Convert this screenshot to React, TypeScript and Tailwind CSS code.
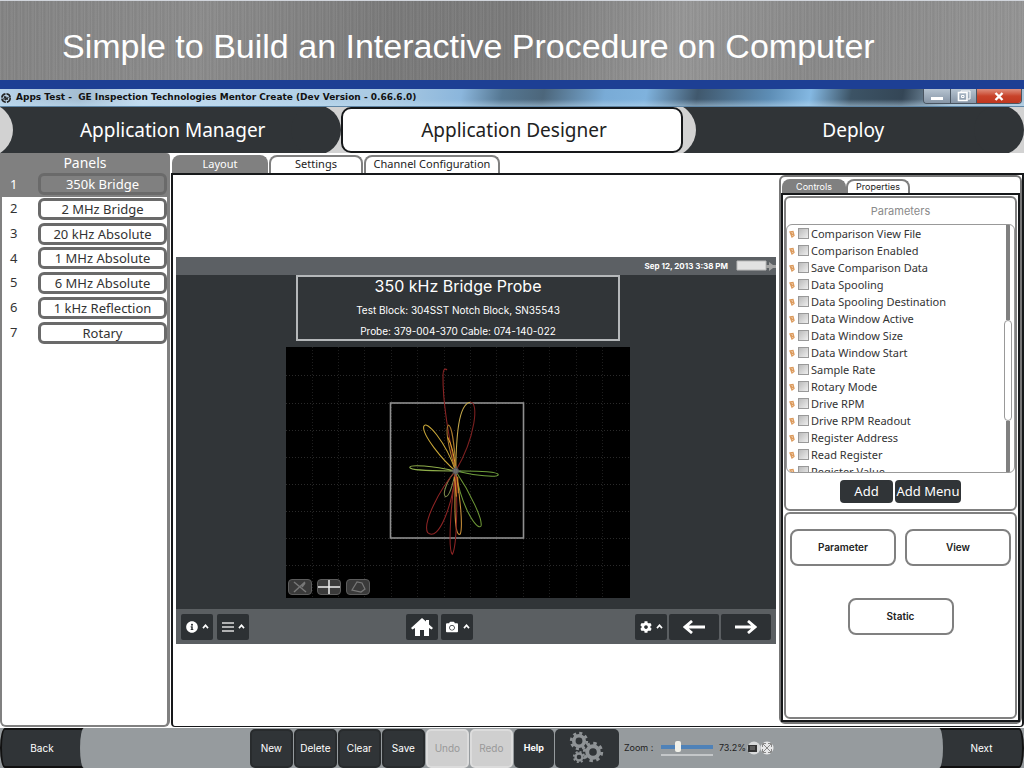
import { cva } from "class-variance-authority"
import clsx from "clsx"
import { FaCamera, FaCog, FaInfoCircle } from "react-icons/fa"
import type { ReactNode } from "react"

const panels = ["350k Bridge", "2 MHz Bridge", "20 kHz Absolute", "1 MHz Absolute", "6 MHz Absolute", "1 kHz Reflection", "Rotary"]

const parameters = [
    "Comparison View File",
    "Comparison Enabled",
    "Save Comparison Data",
    "Data Spooling",
    "Data Spooling Destination",
    "Data Window Active",
    "Data Window Size",
    "Data Window Start",
    "Sample Rate",
    "Rotary Mode",
    "Drive RPM",
    "Drive RPM Readout",
    "Register Address",
    "Read Register",
    "Register Value",
]

const columns = [26, 52, 78, 105, 131, 158, 184, 210, 237, 263, 290, 316]
const rows = [28, 56, 83, 110, 137, 164, 191, 218]

const Banner = () => (
    <header className="h-20 flex items-center pl-[62px] border-t border-gray-300 bg-[#8a8a8a] bg-[repeating-linear-gradient(90deg,rgba(255,255,255,0.07)_0px,rgba(0,0,0,0.05)_2px,rgba(255,255,255,0.03)_5px,rgba(0,0,0,0.06)_7px),linear-gradient(100deg,#858585_0%,#8d8d8d_20%,#7b7b7b_38%,#7c7c7c_50%,#979797_66%,#8a8a8a_80%,#969696_100%)]">
        <h1 className="font-['Liberation_Sans',sans-serif] text-[34px] pt-3 text-white whitespace-nowrap">
            Simple to Build an Interactive Procedure on Computer
        </h1>
    </header>
)

const TitleBar = () => (
    <div className="h-[18px] flex items-start justify-between pr-[2px] border-b border-[#5f86a6] bg-[linear-gradient(180deg,rgba(255,255,255,0)_60%,rgba(190,220,240,0.5)_100%),linear-gradient(100deg,#b9d4ea_0%,#a4bdd2_8%,#c3dcf0_14%,#a9c9e2_38%,#8bb6dc_45%,#557792_49%,#4c667b_53%,#79abd6_59%,#7fb2dd_63%,#40586d_68%,#5d8db5_75%,#84b8e2_79%,#3c5365_83%,#344656_88%,#9db8cd_93%,#a9c3d8_100%)]">
        <div className="flex items-center gap-1 h-full pt-px">
            <svg viewBox="0 0 12 12" className="w-3 h-3" fill="none" stroke="#222">
                <circle cx="6" cy="6" r="4.2" strokeWidth="1.600" strokeDasharray="5.500 1.100" />
                <path d="M3.500 7.500c1.500-4 3.500-3 2-1s1 2 2.800-1.500M4 4.300l4 3.400" strokeWidth="1.100" />
            </svg>
            <span className="font-['DejaVu_Sans',sans-serif] font-bold text-[9px] text-[#111] whitespace-pre">
                {"Apps Test -  GE Inspection Technologies Mentor Create (Dev Version - 0.66.6.0)"}
            </span>
        </div>
        <div className="flex h-[15px] border border-t-0 border-[#4a5561] rounded-b-sm overflow-hidden">
            <button aria-label="Minimize" className="w-[27px] flex justify-center items-end pb-[3px] bg-linear-to-b from-[#b6c3d0] to-[#8695a6] border-r border-[#4a5561]">
                <span className="w-3 h-[3px] bg-white" />
            </button>
            <button aria-label="Maximize" className="w-[26px] flex justify-center items-center bg-linear-to-b from-[#b6c3d0] to-[#8695a6] border-r border-[#4a5561]">
                <svg viewBox="0 0 14 12" className="w-[14px] h-3" fill="none" stroke="#fff" strokeWidth="1.600">
                    <path d="M4 2V1h9v8h-2" strokeWidth="1" />
                    <path d="M1.500 2.500h8.500v8H1.500z" />
                    <path d="M4.500 5.500h2.500v2H4.500z" strokeWidth="1" />
                </svg>
            </button>
            <button aria-label="Close" className="w-11 flex justify-center items-center bg-linear-to-b from-[#dd8d7c] via-[#c8432a] to-[#c0371f]">
                <svg viewBox="0 0 10 9" className="w-[10px] h-[9px]" stroke="#fff" strokeWidth="2.400">
                    <path d="M1.500 1l7 7M8.500 1l-7 7" />
                </svg>
            </button>
        </div>
    </div>
)

// dark steps: a gray disc bites the left edge, a dark disc rounds off the right one
const Steps = () => (
    <nav className="h-[46px] grid grid-cols-3 bg-[#d2d2d2] text-[19px]">
        {["Application Manager", "Application Designer", "Deploy"].map((name) =>
            name === "Application Designer" ? (
                <button key={name} className="bg-white border-2 border-[#16181a] rounded-[10px] text-[#222] pl-1">
                    {name}
                </button>
            ) : (
                <button
                    key={name}
                    className={clsx(
                        "relative overflow-hidden text-white bg-[linear-gradient(#303437,#303437)] bg-[length:calc(100%-16px)_100%] bg-no-repeat",
                        "before:absolute before:-left-[41px] before:-top-1 before:size-[54px] before:rounded-full before:bg-[#d2d2d2]",
                        "after:absolute after:right-0 after:-top-[2px] after:size-[50px] after:rounded-full after:bg-[#303437]",
                        name === "Application Manager" && "pl-1"
                    )}
                >
                    {name}
                </button>
            )
        )}
    </nav>
)

const PanelList = () => (
    <aside className="w-[170px] shrink-0 flex flex-col text-[13px]">
        <h2 className="h-[19px] bg-[#808080] text-white text-center text-[14px] leading-5 rounded-tr-sm">Panels</h2>
        <div className="grow border-2 border-t-0 border-r-3 border-[#808080] rounded-b-md">
            <ol className="h-[173px] grid grid-rows-7">
                {panels.map((name, i) => (
                    <li key={name} className={clsx("flex items-center pl-2", i === 0 ? "bg-[#808080] text-white" : "text-[#333]")}>
                        <span className="w-7">{i + 1}</span>
                        <button className="grow h-[22px] leading-4 border-3 border-[#6a6a6a] rounded-md">{name}</button>
                    </li>
                ))}
            </ol>
        </div>
    </aside>
)

const tab = cva("border-2 border-b-0 border-[#808080] rounded-t-lg", {
    variants: { active: { true: "bg-[#808080] text-white", false: "bg-white text-[#222]" } },
})

const Caret = () => (
    <svg viewBox="0 0 8 6" className="w-[7px] h-[5px]" fill="none" stroke="#fff" strokeWidth="2">
        <path d="M1 5l3-3.500L7 5" />
    </svg>
)

const DeviceButton = ({ label, wide, children }: { label: string; wide?: boolean; children: ReactNode }) => (
    <button aria-label={label} className={clsx("h-[26px] flex items-center justify-center gap-1 bg-[#2d3134] rounded-xs text-white", wide ? "w-[50px]" : "w-8")}>
        {children}
    </button>
)

const ToolButton = ({ label, children }: { label: string; children: ReactNode }) => (
    <button aria-label={label} className="w-6 h-4 flex items-center justify-center rounded-sm bg-[#3a3a3a] border border-[#5c5c5c]">
        {children}
    </button>
)

const Plot = () => (
    <div className="relative w-[344px] h-[251px] mt-[6px] bg-black">
        <svg viewBox="0 0 344 251" className="w-full h-full" fill="none">
            <g stroke="#1e1e1e" strokeDasharray="1 2">
                {columns.map((x) => <path key={x} d={`M${x + 0.5} 0V251`} />)}
                {rows.map((y) => <path key={y} d={`M0 ${y + 0.5}H344`} stroke="#2a2a2a" />)}
            </g>
            <rect x="104.5" y="56" width="133" height="135" stroke="#8f8f8f" strokeWidth="1.600" />
            <g transform="translate(93 13) scale(0.3333)" strokeWidth="3.200">
                <path d="M204 30C198 24 192 28 192 45C191 130 208 220 230 333" stroke="#8d2424" />
                <path d="M230 333C232 230 238 132 274 127" stroke="#c2a64a" />
                <path d="M274 127C300 125 290 230 230 333" stroke="#7c2020" />
                <path d="M230 333C190 300 130 225 134 200C140 175 200 245 230 333Z" stroke="#c9a738" />
                <path d="M230 333C205 250 200 205 208 195C220 195 226 260 232 333Z" stroke="#a8792c" />
                <path d="M230 333C226 280 216 250 206 232" stroke="#d8a52c" />
                <path d="M230 333C150 332 92 332 92 322C94 312 160 318 230 333Z" stroke="#8fae4a" />
                <path d="M230 333C310 332 358 336 358 344C356 354 290 347 230 333Z" stroke="#6f9f3c" />
                <path d="M230 333C275 400 312 480 306 498C294 514 246 440 230 333Z" stroke="#6d9736" />
                <path d="M230 333C204 360 190 400 199 410C212 412 222 370 230 333Z" stroke="#7d8a4c" />
                <path d="M230 333C244 410 252 500 244 522C226 534 226 440 230 333Z" stroke="#c98f3a" />
                <path d="M230 333C236 420 234 560 220 583C206 570 216 430 230 333Z" stroke="#8d2424" />
                <path d="M230 333C180 390 130 490 146 518C180 548 222 430 230 333Z" stroke="#8d2424" />
                <path d="M226 350L232 410M236 350L238 400" stroke="#d88a2a" />
                <circle cx="230" cy="333" r="8" fill="#777" stroke="#555" />
                <path d="M214 333h32M230 317v32" stroke="#666" />
            </g>
        </svg>
        <div className="absolute left-[2px] bottom-[3px] flex gap-[5px]">
            <ToolButton label="Clear trace">
                <svg viewBox="0 0 16 14" className="w-4 h-[14px]" stroke="#777" strokeWidth="1.500" fill="none">
                    <path d="M2 2l12 10M13 2L2 12M10 7l3-4" />
                </svg>
            </ToolButton>
            <ToolButton label="Null">
                <svg viewBox="0 0 22 16" className="w-[22px] h-4 shrink-0" stroke="#eee" strokeWidth="1.500">
                    <path d="M0 8h22M11 1v14" />
                </svg>
            </ToolButton>
            <ToolButton label="Shape">
                <svg viewBox="0 0 16 14" className="w-4 h-[14px]" stroke="#777" strokeWidth="1.200" fill="none">
                    <path d="M2 10l5-8 5 1 3 6-4 3z" />
                </svg>
            </ToolButton>
        </div>
    </div>
)

const Device = () => (
    <div className="w-full flex flex-col bg-[#313538] text-white">
        <div className="h-[18px] flex items-center justify-end gap-2 bg-[#5c6064]">
            <span className="text-[8px] font-bold font-['Inter',sans-serif]">Sep 12, 2013 3:38 PM</span>
            <svg viewBox="0 0 40 12" className="w-10 h-3">
                <path d="M1 1h29v9H1z" fill="#e2e2e2" stroke="#bbb" />
                <path d="M30 5h3V2l4 3h3v3h-3l-4 3V8h-3z" fill="#a4a4a4" />
            </svg>
        </div>
        <div className="flex flex-col items-center pr-9 pb-[11px]">
            <div className="w-[324px] h-[66px] border-2 border-[#b5b8ba] text-center font-['Inter',sans-serif]">
                <h3 className="text-[16px] leading-[19px]">350 kHz Bridge Probe</h3>
                <p className="text-[10px] leading-[21px] pt-1">Test Block: 304SST Notch Block, SN35543</p>
                <p className="text-[10px] leading-[21px]">Probe: 379-004-370 Cable: 074-140-022</p>
            </div>
            <Plot />
        </div>
        <div className="h-[35px] flex items-center justify-between px-[5px] bg-[#5b5f62]">
            <div className="flex gap-1 w-[136px]">
                <DeviceButton label="Info"><FaInfoCircle className="w-3 h-3" /><Caret /></DeviceButton>
                <DeviceButton label="Menu">
                    <svg viewBox="0 0 12 10" className="w-3 h-[10px]" stroke="#ddd" strokeWidth="1.600"><path d="M0 1h12M0 5h12M0 9h12" /></svg>
                    <Caret />
                </DeviceButton>
            </div>
            <div className="flex gap-[3px] pr-[72px] grow justify-end">
                <DeviceButton label="Home">
                    <svg viewBox="0 0 22 18" className="w-[22px] h-[18px]" fill="#fff">
                        <path d="M11 0L0 10l1.500 1.500L4 10v8h5v-6h4v6h5v-8l2.500 1.500L22 10l-4-3.600V2h-3v1.600z" />
                    </svg>
                </DeviceButton>
                <DeviceButton label="Camera"><FaCamera className="w-[14px] h-3" /><Caret /></DeviceButton>
            </div>
            <div className="flex gap-[2px] pl-[90px]">
                <DeviceButton label="Settings"><FaCog className="w-3 h-3" /><Caret /></DeviceButton>
                {["Previous", "Following"].map((label) => (
                    <DeviceButton key={label} label={label} wide>
                        <svg viewBox="0 0 22 14" className={clsx("w-[22px] h-[14px]", label === "Following" && "rotate-180")} fill="none" stroke="#fff" strokeWidth="2.800">
                            <path d="M22 7H2M9 1L2 7l7 6" />
                        </svg>
                    </DeviceButton>
                ))}
            </div>
        </div>
    </div>
)

const BoxButton = ({ children }: { children: ReactNode }) => (
    <button className="w-[106px] h-[37px] border-2 border-[#808080] rounded-lg text-[10px] font-semibold text-[#222] font-['Inter',sans-serif]">{children}</button>
)

const ControlsPanel = () => (
    <aside className="w-[243px] shrink-0 mb-[2px] flex flex-col border-2 border-[#777] rounded-md">
        <div className="h-4 flex items-end text-[9px] leading-3 pl-px font-['Inter',sans-serif]">
            <button className={clsx(tab({ active: true }), "w-16 h-[14px] pb-px")}>Controls</button>
            <button className={clsx(tab({ active: false }), "w-16 h-[14px] pb-px")}>Properties</button>
        </div>
        <div className="grow flex flex-col border-2 border-[#16181a] p-px gap-px">
            <section className="h-[315px] flex flex-col border-2 border-[#808080] rounded-md">
                <h2 className="text-[11px] leading-[26px] text-[#8a8a8a] text-center font-['Inter',sans-serif]">Parameters</h2>
                <div className="h-[249px] flex border border-[#999] rounded-md overflow-hidden">
                    <ul className="grow text-[11px] leading-[17px] text-[#333]">
                        {parameters.map((name) => (
                            <li key={name}>
                                <label className="h-[17px] flex items-center whitespace-nowrap pl-[2px]">
                                    <svg viewBox="0 0 6 8" className="w-[6px] h-2 mr-[3px]" fill="none" stroke="#dc9a5c" strokeWidth="1.300">
                                        <path d="M1 2l3-.500 1 4-2 1.500zM1 2l3 3" />
                                    </svg>
                                    <input type="checkbox" className="appearance-none w-[11px] h-[11px] mr-[2px] border border-[#999] bg-linear-to-br from-[#bbb] to-[#eee]" />
                                    {name}
                                </label>
                            </li>
                        ))}
                    </ul>
                    <div className="w-2 mr-[2px] flex flex-col items-center">
                        <span className="w-1 h-[95px] bg-[#808080]" />
                        <span className="w-2 h-[101px] shrink-0 border border-[#999] rounded-sm bg-white" />
                        <span className="w-1 grow bg-[#808080]" />
                    </div>
                </div>
                <div className="flex justify-center gap-[2px] pt-[7px] text-[13px] text-white">
                    <button className="w-[53px] h-[23px] rounded-sm bg-[#303437]">Add</button>
                    <button className="w-[66px] h-[23px] rounded-sm bg-[#303437] whitespace-nowrap">Add Menu</button>
                </div>
            </section>
            <section className="grow border-2 border-[#808080] rounded-md pt-[15px] px-1">
                <div className="flex justify-between">
                    <BoxButton>Parameter</BoxButton>
                    <BoxButton>View</BoxButton>
                </div>
                <div className="flex justify-center pt-8">
                    <BoxButton>Static</BoxButton>
                </div>
            </section>
        </div>
    </aside>
)

const Workspace = () => (
    <div className="grow min-w-0 flex flex-col">
        <div className="h-5 flex items-end gap-px text-[11px] leading-[14px] pl-[2px]">
            <button className={clsx(tab({ active: true }), "w-24 h-[18px] pb-[2px]")}>Layout</button>
            <button className={clsx(tab({ active: false }), "w-[94px] h-[18px] pb-[2px]")}>Settings</button>
            <button className={clsx(tab({ active: false }), "w-[136px] h-[18px] pb-[2px]")}>Channel Configuration</button>
        </div>
        <div className="grow flex border-2 border-b-1 border-[#16181a] rounded-b-sm ml-px">
            <div className="grow flex items-center px-[3px]">
                <Device />
            </div>
            <ControlsPanel />
        </div>
    </div>
)

const footerButton = cva("w-[43px] h-[39px] rounded-[5px] text-[10px] border-2", {
    variants: {
        kind: {
            dark: "bg-[#303437] border-[#282b2d] text-white",
            off: "bg-[#cfcfcf] border-[#dcdcdc] text-[#999]",
        },
    },
})

const Gear = ({ x, y, r }: { x: number; y: number; r: number }) => (
    <g transform={`translate(${x} ${y})`} fill="none" stroke="#8f9396">
        <circle r={r * 0.58} strokeWidth={r * 0.4} />
        <circle r={r * 0.87} strokeWidth={r * 0.3} strokeDasharray={`${r * 0.341} ${r * 0.342}`} />
    </g>
)

const Footer = () => (
    <footer className="h-10 flex justify-between bg-[#969b9e] text-[10px] font-['Inter',sans-serif]">
        <button className="w-[84px] bg-[#303437] border-2 border-[#111] text-white [border-radius:5px_0_0_5px/20px_0_0_20px] relative after:absolute after:-right-[2px] after:-inset-y-[2px] after:w-1 after:bg-[#969b9e] after:[border-radius:4px_0_0_4px/20px_0_0_20px]">
            Back
        </button>
        <div className="flex items-center gap-px pl-[2px]">
            {["New", "Delete", "Clear", "Save"].map((name) => (
                <button key={name} className={footerButton({ kind: "dark" })}>{name}</button>
            ))}
            {["Undo", "Redo"].map((name) => (
                <button key={name} disabled className={footerButton({ kind: "off" })}>{name}</button>
            ))}
            <button className="w-10 h-[39px] rounded-[5px] bg-[#303437] text-white text-[9px] font-bold">Help</button>
            <button aria-label="Options" className="w-16 h-[39px] rounded-[5px] bg-[#303437] flex items-center justify-center">
                <svg viewBox="0 0 38 34" className="w-[38px] h-[34px]">
                    <Gear x={11} y={10} r={9} />
                    <Gear x={25} y={21} r={10} />
                    <Gear x={11} y={26} r={6} />
                </svg>
            </button>
            <label htmlFor="zoom" className="w-10 pl-1 text-[9px] text-[#222] whitespace-nowrap">Zoom :</label>
            <div className="w-[52px] border-b-2 border-[#c4c7c9] pb-px">
                <input
                    id="zoom"
                    type="range"
                    defaultValue={30}
                    className="block w-full h-3 appearance-none bg-[linear-gradient(#4f82b8,#4f82b8)] bg-[length:100%_4px] bg-center bg-no-repeat [&::-webkit-slider-thumb]:appearance-none [&::-webkit-slider-thumb]:w-[6px] [&::-webkit-slider-thumb]:h-[11px] [&::-webkit-slider-thumb]:rounded-xs [&::-webkit-slider-thumb]:bg-[#f1f1ea]"
                />
            </div>
            <output htmlFor="zoom" className="pl-[5px] text-[9px] text-[#222]">73.2%</output>
            <svg viewBox="0 0 28 14" className="w-7 h-[14px]">
                <circle cx="7" cy="7" r="6.500" fill="#d8dadb" />
                <path d="M1 4h9v7H1z" fill="#333" />
                <path d="M3 6h5M3 8h5" stroke="#888" />
                <circle cx="20" cy="7" r="6.500" fill="#e6e7e8" />
                <path d="M16 3l8 8M24 3l-8 8M15.500 6V2.500H19M21 2.500h3.500V6M15.500 8v3.500H19M21 11.500h3.500V8" stroke="#888" fill="none" />
            </svg>
        </div>
        <button className="w-[85px] bg-[#303437] border-2 border-[#111] text-white [border-radius:0_5px_5px_0/0_20px_20px_0] relative after:absolute after:-left-[2px] after:-inset-y-[2px] after:w-1 after:bg-[#969b9e] after:[border-radius:0_4px_4px_0/0_20px_20px_0]">
            Next
        </button>
    </footer>
)

export default function App() {
    return (
        <div className="min-h-screen flex flex-col bg-white font-['Noto_Sans',sans-serif]">
            <Banner />
            <div className="h-[9px] bg-[#1d3f94]" />
            <TitleBar />
            <Steps />
            <main className="grow flex pb-px">
                <PanelList />
                <Workspace />
            </main>
            <Footer />
        </div>
    )
}
